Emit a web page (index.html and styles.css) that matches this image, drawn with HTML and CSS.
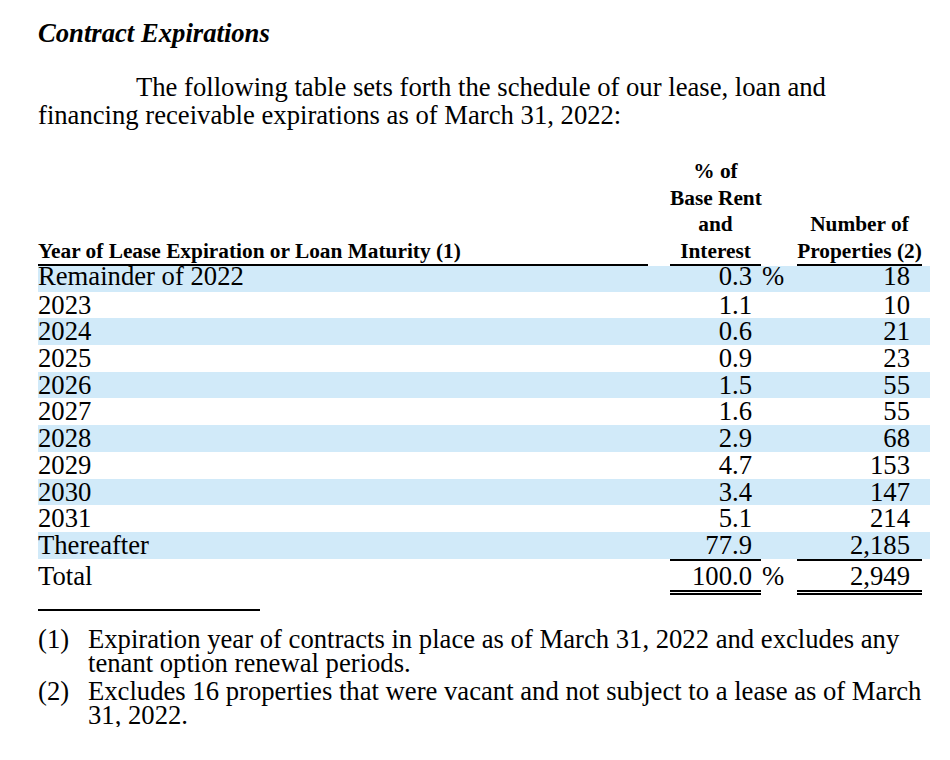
FILE: index.html
```html
<!DOCTYPE html>
<html lang="en">
<head>
<meta charset="utf-8">
<title>Contract Expirations</title>
<link rel="stylesheet" href="styles.css">
</head>
<body>
<div class="page">
  <p class="title">Contract Expirations</p>
  <p class="intro">The following table sets forth the schedule of our lease, loan and financing receivable expirations as of March 31, 2022:</p>

  <table class="exp">
    <colgroup>
      <col class="c-label">
      <col class="c-gap">
      <col class="c-pct">
      <col class="c-sym">
      <col class="c-num">
      <col class="c-end">
    </colgroup>
    <thead>
      <tr>
        <th class="h-label ruled">Year of Lease Expiration or Loan Maturity (1)</th>
        <th></th>
        <th class="h-center ruled">% of<br>Base Rent<br>and<br>Interest</th>
        <th></th>
        <th class="h-center ruled">Number of<br>Properties (2)</th>
        <th></th>
      </tr>
    </thead>
    <tbody>
      <tr class="shade first">
        <td>Remainder of 2022</td><td></td><td class="num pct">0.3</td><td class="sym">%</td><td class="num cnt">18</td><td></td>
      </tr>
      <tr>
        <td>2023</td><td></td><td class="num pct">1.1</td><td></td><td class="num cnt">10</td><td></td>
      </tr>
      <tr class="shade">
        <td>2024</td><td></td><td class="num pct">0.6</td><td></td><td class="num cnt">21</td><td></td>
      </tr>
      <tr>
        <td>2025</td><td></td><td class="num pct">0.9</td><td></td><td class="num cnt">23</td><td></td>
      </tr>
      <tr class="shade">
        <td>2026</td><td></td><td class="num pct">1.5</td><td></td><td class="num cnt">55</td><td></td>
      </tr>
      <tr>
        <td>2027</td><td></td><td class="num pct">1.6</td><td></td><td class="num cnt">55</td><td></td>
      </tr>
      <tr class="shade">
        <td>2028</td><td></td><td class="num pct">2.9</td><td></td><td class="num cnt">68</td><td></td>
      </tr>
      <tr>
        <td>2029</td><td></td><td class="num pct">4.7</td><td></td><td class="num cnt">153</td><td></td>
      </tr>
      <tr class="shade">
        <td>2030</td><td></td><td class="num pct">3.4</td><td></td><td class="num cnt">147</td><td></td>
      </tr>
      <tr>
        <td>2031</td><td></td><td class="num pct">5.1</td><td></td><td class="num cnt">214</td><td></td>
      </tr>
      <tr class="shade">
        <td>Thereafter</td><td></td><td class="num pct">77.9</td><td></td><td class="num cnt">2,185</td><td></td>
      </tr>
      <tr class="total">
        <td>Total</td><td></td><td class="num pct sum">100.0</td><td class="sym">%</td><td class="num cnt sum">2,949</td><td></td>
      </tr>
    </tbody>
  </table>

  <div class="fn-rule"></div>

  <ol class="notes">
    <li class="note"><span class="mark">(1)</span><span class="note-text">Expiration year of contracts in place as of March 31, 2022 and excludes any tenant option renewal periods.</span></li>
    <li class="note"><span class="mark">(2)</span><span class="note-text">Excludes 16 properties that were vacant and not subject to a lease as of March 31, 2022.</span></li>
  </ol>
</div>
</body>
</html>
```

FILE: styles.css
```css
html, body {
  background: #ffffff;
}

body {
  margin: 0;
  padding: 18px 0 0 38px;
  font-family: "Liberation Serif", "Times New Roman", Times, serif;
  color: #000000;
}

.page {
  width: 892px;
}

.title {
  margin: 0;
  font-style: italic;
  font-weight: 700;
  font-size: 26.67px;
  line-height: 30px;
}

.intro {
  margin: 26px 0 0;
  width: 880px;
  font-size: 26.67px;
  line-height: 27.5px;
  text-indent: 98px;
}

.exp {
  margin-top: 29px;
  border-collapse: separate;
  border-spacing: 0;
  table-layout: fixed;
  width: 892px;
}

.c-label { width: 610px; }
.c-gap { width: 22px; }
.c-pct { width: 91px; }
.c-sym { width: 36px; }
.c-num { width: 125px; }
.c-end { width: 8px; }

.exp th {
  padding: 0;
  font-weight: 700;
  font-size: 21.33px;
  line-height: 26.5px;
  vertical-align: bottom;
  white-space: nowrap;
}

.h-label {
  text-align: left;
}

.h-center {
  text-align: center;
}

.ruled {
  border-bottom: 2px solid #000000;
}

.exp td {
  padding: 0;
  font-size: 26.67px;
  line-height: 26.7px;
  white-space: nowrap;
}

.exp tr.first td {
  line-height: 20px;
  padding-bottom: 5.6px;
}

.shade {
  background: #d1eaf9;
}

.num {
  text-align: right;
}

.exp td.pct {
  padding-right: 9px;
}

.exp td.cnt {
  padding-right: 12px;
}

.exp td.sym {
  text-align: left;
  padding-left: 1px;
}

.exp tr.total td {
  line-height: 28px;
  padding-top: 1.5px;
  border-top: 2px solid transparent;
  border-bottom: 5px double transparent;
}

.exp tr.total td.sum {
  border-top-color: #000000;
  border-bottom-color: #000000;
}

.fn-rule {
  width: 222px;
  height: 2px;
  margin-top: 13.5px;
  background: #000000;
}

.notes {
  list-style: none;
  margin: 16px 0 0;
  padding: 0;
}

.note {
  display: grid;
  grid-template-columns: 50px 842px;
  font-size: 26.67px;
  line-height: 24px;
}

.note + .note {
  margin-top: 4px;
}
```
